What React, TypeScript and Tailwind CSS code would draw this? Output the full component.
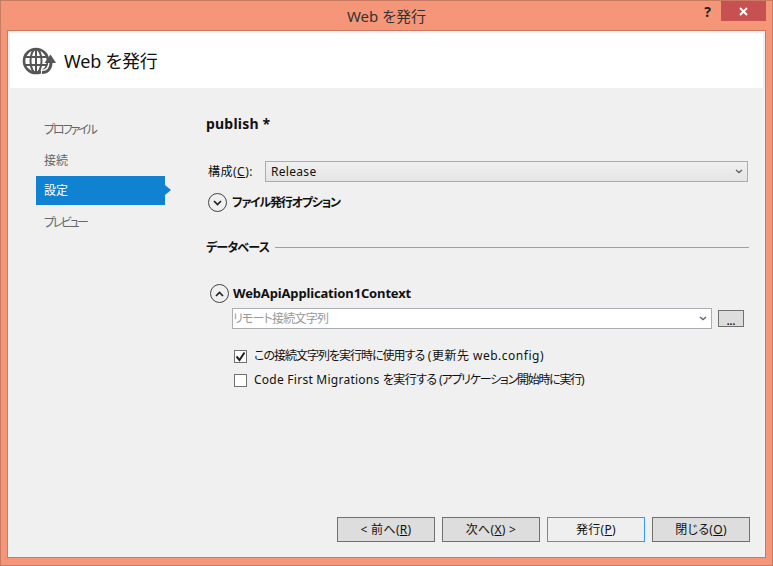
import React from "react";

const font = { fontFamily: '"Noto Sans", "Noto Sans CJK JP", sans-serif' };

function Chevron({ className }: { className?: string }) {
  return (
    <svg width="8" height="5" viewBox="0 0 8 5" className={className}>
      <path d="M1 1l3 2.500L7 1" fill="none" stroke="#666" strokeWidth="1.500" />
    </svg>
  );
}

function RoundToggle({ up }: { up?: boolean }) {
  return (
    <span className="flex h-[19px] w-[19px] shrink-0 items-center justify-center rounded-full border border-[#444] bg-[#f0f0f0]">
      <svg width="9" height="6" viewBox="0 0 9 6">
        <path d={up ? "M1 5l3.5-3.5L8 5" : "M1 1l3.5 3.5L8 1"} fill="none" stroke="#222" strokeWidth="1.7" />
      </svg>
    </span>
  );
}

function GlobeIcon() {
  return (
    <svg width="34" height="30" viewBox="0 0 34 30" className="shrink-0">
      <g fill="none" stroke="#555">
        <circle cx="14" cy="15" r="12" strokeWidth="2.600" />
        <ellipse cx="14" cy="15" rx="5.500" ry="12" strokeWidth="2" />
        <path d="M2.500 11h23M2.500 19h23M14 3v24" strokeWidth="2" />
      </g>
      <path d="M19 27c6.500 0 10.500-4.500 10.500-11" fill="none" stroke="#fff" strokeWidth="6.500" />
      <path d="M20 26.500c5.500 0 9-4 9-10" fill="none" stroke="#555" strokeWidth="3" />
      <path d="M22.500 17l6-8.500 5.500 8.500z" fill="#555" />
    </svg>
  );
}

function NavItem({ label, active, className }: { label: string; active?: boolean; className?: string }) {
  if (active) {
    return (
      <div className="relative flex h-[29px] items-center bg-[#1182d1] pl-2 text-white">
        {label}
        <span className="absolute left-full top-[9px] h-0 w-0 border-y-[5.500px] border-l-[6px] border-y-transparent border-l-[#1182d1]" />
      </div>
    );
  }
  return <div className={"flex h-[31px] items-center pl-2 text-[#666] " + (className || "")}>{label}</div>;
}

function FootButton({ children, focused }: { children: React.ReactNode; focused?: boolean }) {
  return (
    <button
      className={
        "flex h-[25px] w-[98px] items-center justify-center whitespace-pre border text-xs tracking-[0.3px] text-[#111] " +
        (focused ? "border-[#3399ff] bg-[#efefef]" : "border-[#707070] bg-[#dddddd]")
      }
    >
      {children}
    </button>
  );
}

export default function App() {
  return (
    <div
      style={font}
      className='flex h-[566px] w-[773px] flex-col border border-[#c87a62] bg-[#f69679] text-xs text-[#111] [font-feature-settings:"palt"]'
    >
      {/* title bar */}
      <div className="relative flex h-[29px] shrink-0 items-center justify-center text-[15px] text-[#333]">
        Web を発行
        <span className="absolute right-[61px] top-[2px] text-[14px] font-bold text-[#222]">?</span>
        <span className="absolute right-[6px] top-0 flex h-[20px] w-[45px] items-center justify-center bg-[#c75050]">
          <svg width="9" height="9" viewBox="0 0 9 9">
            <path d="M1 1l7 7M8 1l-7 7" stroke="#fff" strokeWidth="2" />
          </svg>
        </span>
      </div>

      {/* dialog body */}
      <div className="mb-[7px] ml-[6px] mr-[6px] flex min-h-0 flex-1 flex-col border border-[#c87a62] bg-[#f0f0f0] p-[2px] pb-0">
        <div className="flex h-[55px] shrink-0 items-center gap-[8px] bg-white pl-[12px] text-[18px] tracking-[-0.2px] text-[#111]">
          <GlobeIcon />
          <span>Web を発行</span>
        </div>

        <div className="flex min-h-0 flex-1">
          {/* side nav */}
          <div className="ml-[26px] mt-[26px] w-[129px] shrink-0">
            <NavItem label="プロファイル" className="tracking-[-2.1px]" />
            <NavItem label="接続" />
            <NavItem label="設定" active />
            <NavItem label="プレビュー" className="mt-[2px] tracking-[-2.4px]" />
          </div>

          {/* settings */}
          <div className="ml-[41px] mr-[13px] flex min-w-0 flex-1 flex-col">
            <div className="mt-[27px] mb-[-1px] text-sm font-bold leading-[18px] tracking-[0.2px]">publish *</div>

            <div className="ml-[2px] mr-[2px] mt-[29px] flex items-center">
              <span className="w-[57px] tracking-[0.5px]">
                構成(<span className="underline">C</span>):
              </span>
              <div className="flex h-[21px] flex-1 items-center justify-between border border-[#acacac] bg-gradient-to-b from-[#f0f0f0] to-[#e5e5e5] pl-[5px] pr-[4px]">
                <span className="tracking-[0.3px]">Release</span>
                <Chevron />
              </div>
            </div>

            <div className="ml-[2px] mt-[11px] flex items-center gap-[5px] font-bold">
              <RoundToggle />
              <span className="tracking-[-1.2px]">ファイル発行オプション</span>
            </div>

            <div className="mr-px mt-[28px] flex items-center gap-[6px] font-bold">
              <span className="tracking-[-0.8px]">データベース</span>
              <span className="mb-px h-px flex-1 bg-[#a0a0a0]" />
            </div>

            <div className="ml-[4px] mt-[28px] flex items-center gap-[4px] text-[13px] font-bold">
              <RoundToggle up />
              <span className="tracking-[-0.15px]">WebApiApplication1Context</span>
            </div>

            <div className="ml-[26px] mt-[5px] mr-[6px] flex items-center gap-[6px]">
              <div className="flex h-[21px] flex-1 items-center justify-between border border-[#abadb3] bg-white pr-[4px] text-[#999]">
                <span className="tracking-[-0.8px]">リモート接続文字列</span>
                <Chevron />
              </div>
              <button className="flex h-[17px] w-[26px] items-center justify-center border border-[#707070] bg-[#dddddd] pt-[5px] text-[10px] font-bold leading-none">
                ...
              </button>
            </div>

            <label className="ml-[28px] mt-[19px] flex items-center gap-[7px]">
              <span className="flex h-[13px] w-[13px] items-center justify-center border border-[#707070] bg-white">
                <svg width="11" height="11" viewBox="0 0 11 11">
                  <path d="M1.500 5.500l3 3.500L9.500 1.500" fill="none" stroke="#222" strokeWidth="2" />
                </svg>
              </span>
              <span className="whitespace-pre">
                <span className="tracking-[-1px]">この接続文字列を実行時に使用する</span>
                <span className="tracking-[0.5px]"> (更新先 web.config)</span>
              </span>
            </label>
            <label className="ml-[28px] mt-[8px] flex items-center gap-[7px]">
              <span className="h-[13px] w-[13px] border border-[#707070] bg-white" />
              <span className="whitespace-pre">
                <span className="tracking-[0.25px]">Code First Migrations </span>
                <span className="tracking-[-0.6px]">を実行する </span>
                <span className="tracking-[-1.25px]">(アプリケーション開始時に実行)</span>
              </span>
            </label>

            <div className="mt-auto mb-[15px] flex justify-end gap-[7px]">
              <FootButton>
                {"< 前へ("}<span className="underline">R</span>)
              </FootButton>
              <FootButton>
                次へ(<span className="underline">X</span>{") >"}
              </FootButton>
              <FootButton focused>
                発行(<span className="underline">P</span>)
              </FootButton>
              <FootButton>
                閉じる(<span className="underline">O</span>)
              </FootButton>
            </div>
          </div>
        </div>
      </div>
    </div>
  );
}
